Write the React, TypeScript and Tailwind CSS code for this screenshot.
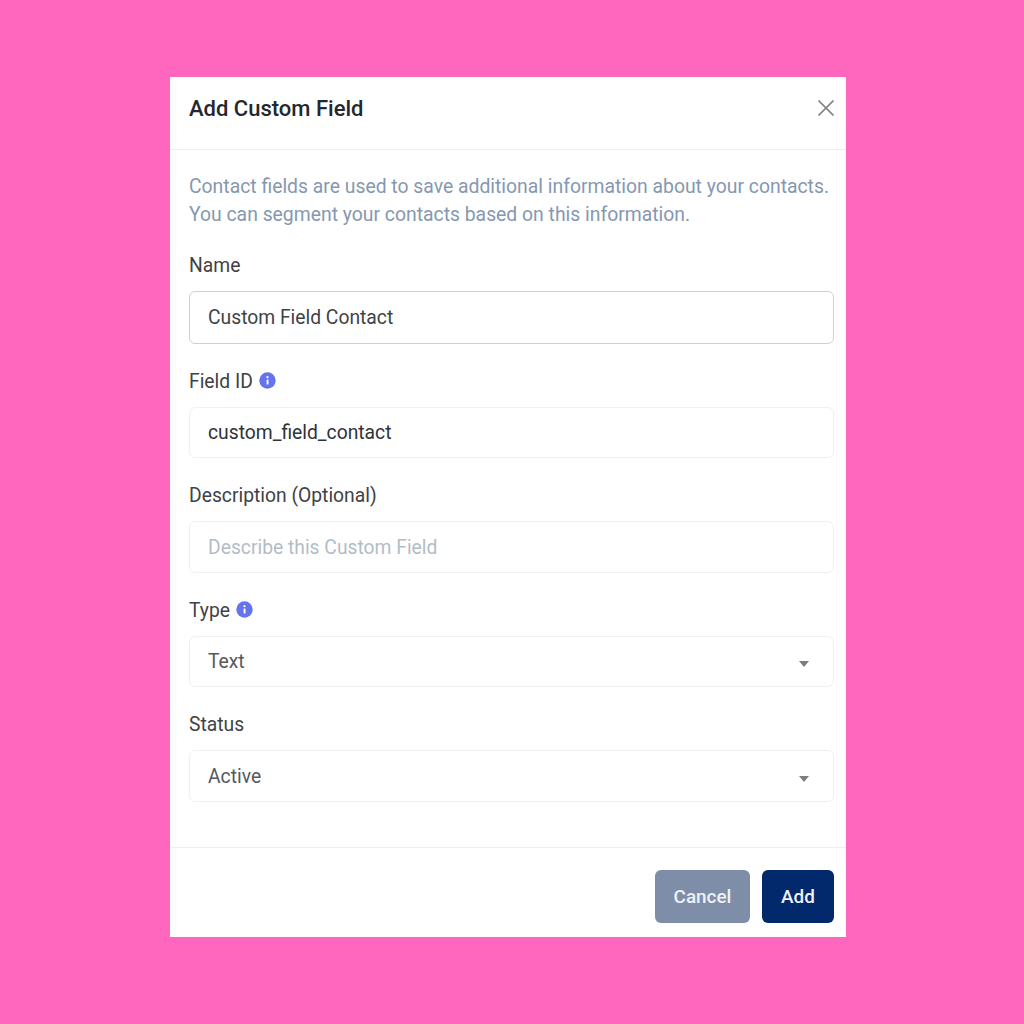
import React from "react";

const font = { fontFamily: "Roboto, sans-serif" };

function Info() {
  return (
    <svg width="17" height="17" viewBox="0 0 17 17" className="ml-[6px] shrink-0 -translate-y-px">
      <circle cx="8.5" cy="8.5" r="8.2" fill="#6673ee" />
      <rect x="7.6" y="7.4" width="1.9" height="5" rx="0.5" fill="#fff" />
      <circle cx="8.5" cy="5.2" r="1.1" fill="#fff" />
    </svg>
  );
}

function Caret() {
  return (
    <svg width="10" height="6" viewBox="0 0 10 6" className="mt-[3px]">
      <path d="M0 0h10L5 6z" fill="#7d7d7d" />
    </svg>
  );
}

function Field({
  label,
  info,
  value,
  tone = "text-[#3f4347]",
  strong,
  select,
  height = "h-[51.5px]",
}: {
  label: string;
  info?: boolean;
  value: string;
  tone?: string;
  strong?: boolean;
  select?: boolean;
  height?: string;
}) {
  return (
    <div className="flex flex-col">
      <div className="flex items-center h-[24px] mb-[13px] text-[19.3px] leading-[24px] text-[#3f4245]">
        {label}
        {info && <Info />}
      </div>
      <div
        className={`flex items-center justify-between ${height} rounded-[6px] border pt-[2px] pl-[18px] pr-[24px] text-[19.3px] ${tone} ${
          strong ? "border-[#cdd0d4]" : "border-[#eef0f2]"
        }`}
      >
        <span>{value}</span>
        {select && <Caret />}
      </div>
    </div>
  );
}

export default function App() {
  return (
    <div className="min-h-[1024px] bg-[#ff66bd] pt-[77px] pl-[170px]" style={font}>
      <div className="flex h-[860px] w-[676px] flex-col bg-white">
        <div className="flex h-[73px] shrink-0 items-center justify-between border-b border-[#eceef0] pb-[10px] pl-[19px] pr-[11px]">
          <h2 className="text-[22px] font-medium text-[#24282c]">Add Custom Field</h2>
          <svg width="18" height="18" viewBox="0 0 18 18" fill="none" stroke="#7c7f82" strokeWidth="1.7">
            <path d="M1.5 1.5l15 15M16.5 1.5l-15 15" />
          </svg>
        </div>
        <div className="flex flex-1 flex-col pl-[19px] pr-[12px]">
          <p className="mt-[22.5px] text-[19.35px] leading-[28.5px] text-[#8598b0] whitespace-nowrap">
            Contact fields are used to save additional information about your contacts.
            <br />
            You can segment your contacts based on this information.
          </p>
          <div className="mt-[24.8px] flex flex-col gap-[26px]">
            <Field label="Name" value="Custom Field Contact" strong height="h-[52.5px]" />
            <Field label="Field ID" info value="custom_field_contact" tone="text-[#2f3337]" />
            <Field label="Description (Optional)" value="Describe this Custom Field" tone="text-[#b3bcc6]" />
            <Field label="Type" info value="Text" tone="text-[#55595d]" select />
            <Field label="Status" value="Active" tone="text-[#55595d]" select />
          </div>
        </div>
        <div className="flex h-[90px] shrink-0 items-start justify-end gap-[12px] border-t border-[#eceef0] pr-[12px] pt-[22px]">
          <button className="h-[53px] w-[95px] rounded-[6px] bg-[#7e8ea8] pt-[2px] text-[18.9px] font-medium text-[#eef1f6]">
            Cancel
          </button>
          <button className="h-[53px] w-[72px] rounded-[6px] bg-[#02296b] pt-[2px] text-[18.9px] font-medium text-[#eef1f6]">
            Add
          </button>
        </div>
      </div>
    </div>
  );
}
